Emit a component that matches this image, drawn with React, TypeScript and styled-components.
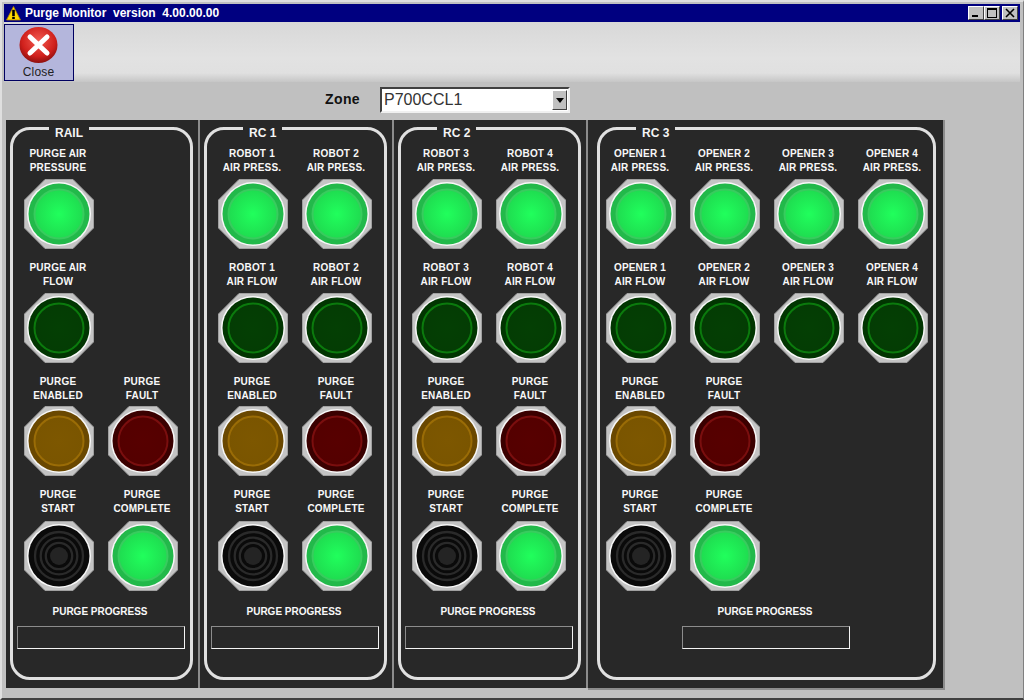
import React from "react";
import styled, { createGlobalStyle } from "styled-components";

const Global = createGlobalStyle`
  html, body { margin: 0; padding: 0; background: #c0c0c0; }
  * { box-sizing: border-box; }
  body { font-family: "Liberation Sans", Arial, sans-serif; }
`;

const Win = styled.div`
  width: 1024px;
  height: 700px;
  overflow: hidden;
  background: #c0c0c0;
  border-top: 2px solid #dfdfdf;
  border-left: 2px solid #dfdfdf;
  border-right: 1px solid #808080;
  border-bottom: 2px solid #404040;
  padding: 2px 3px 0 2px;
  display: flex;
  flex-direction: column;
`;
const TitleBar = styled.div`
  height: 18px;
  flex: none;
  background: #000080;
  display: flex;
  align-items: center;
  padding: 0 2px 0 2px;
  color: #fff;
`;
const TitleText = styled.span`
  font: bold 12px/18px "Liberation Sans", Arial, sans-serif;
  white-space: pre;
  margin-left: 4px;
`;
const WinBtns = styled.div`
  margin-left: auto;
  display: flex;
`;
const WinBtn = styled.div<{ $gap?: number }>`
  width: 16px;
  height: 14px;
  margin-left: ${(p) => p.$gap ?? 0}px;
  background: #c0c0c0;
  border: 1px solid;
  border-color: #fff #404040 #404040 #fff;
  display: flex;
  align-items: center;
  justify-content: center;
`;
const Toolbar = styled.div`
  height: 60px;
  flex: none;
  padding-top: 2px;
  background: linear-gradient(to bottom, #d8d8d8 0%, #e2e2e2 60%, #e0e0e0 85%, #c6c6c6 100%);
`;
const CloseBtn = styled.div`
  width: 70px;
  height: 57px;
  background: #b4b6dc;
  border: 1px solid #000060;
  display: flex;
  flex-direction: column;
  align-items: center;
  padding-top: 2px;
`;
const CloseLabel = styled.span`
  margin-top: 2px;
  margin-left: -1px;
  font: 12px/14px "Liberation Sans", Arial, sans-serif;
  color: #222;
  letter-spacing: 0.2px;
`;
const ZoneRow = styled.div`
  height: 38px;
  flex: none;
  display: flex;
  align-items: flex-start;
  padding: 5px 0 0 321px;
`;
const ZoneLabel = styled.span`
  font: bold 14px/24px "Liberation Sans", Arial, sans-serif;
  color: #111;
  width: 55px;
  letter-spacing: 0.4px;
`;
const Select = styled.div`
  width: 190px;
  height: 26px;
  background: #fff;
  border: 2px solid;
  border-color: #404040 #f0f0f0 #f0f0f0 #404040;
  display: flex;
  align-items: center;
  padding-left: 2px;
  font: 16px/22px "Liberation Sans", Arial, sans-serif;
  color: #333;
`;
const Arrow = styled.div`
  margin-left: auto;
  margin-right: 1px;
  width: 15px;
  height: 20px;
  background: #c0c0c0;
  border: 1px solid;
  border-color: #fff #404040 #404040 #fff;
  display: flex;
  align-items: center;
  justify-content: center;
`;
const Panels = styled.div`
  display: flex;
  margin-left: 2px;
`;
const Panel = styled.div<{ $w: number }>`
  width: ${(p) => p.$w}px;
  height: 568px;
  background: #282828;
  padding: 7px 0 8px 0;
  margin-right: 2px;
  box-shadow: 2px 0 0 #8c8c8c;
`;
const LastPanel = styled(Panel)`
  box-shadow: 2px 0 0 #8c8c8c, 0 2px 0 #8c8c8c, 2px 2px 0 #8c8c8c;
`;
const Frame = styled.div<{ $w: number; $left: number }>`
  position: relative;
  width: ${(p) => p.$w}px;
  height: 553px;
  margin-left: ${(p) => p.$left}px;
  border: 3px solid #e0e0e0;
  border-radius: 20px;
  padding-top: 16px;
`;
const Legend = styled.span<{ $left: number }>`
  position: absolute;
  top: -5px;
  left: ${(p) => p.$left}px;
  padding: 0 6px;
  background: #282828;
  color: #f4f4f4;
  font: bold 12px/16px "Liberation Sans", Arial, sans-serif;
  white-space: nowrap;
`;
const Row = styled.div<{ $top: number; $inset: number }>`
  display: flex;
  margin-top: ${(p) => p.$top}px;
  margin-left: ${(p) => p.$inset}px;
`;
const Cell = styled.div<{ $gap: number }>`
  width: 84px;
  flex: none;
  display: flex;
  flex-direction: column;
  align-items: center;
  gap: ${(p) => p.$gap}px;
`;
const Label = styled.div`
  width: 84px;
  height: 28px;
  padding: 1px 2px 0 0;
  text-align: center;
  color: #f8f8f8;
  font: bold 10px/14px "Liberation Sans", Arial, sans-serif;
  letter-spacing: 0.2px;
  white-space: pre-line;
`;
const ProgressLabel = styled.div`
  margin-top: 14px;
  height: 14px;
  padding-right: 3px;
  text-align: center;
  color: #f8f8f8;
  font: bold 10px/14px "Liberation Sans", Arial, sans-serif;
`;
const Bar = styled.div<{ $shift: number }>`
  width: 168px;
  height: 23px;
  margin-top: 7px;
  margin-left: ${(p) => p.$shift}px;
  border: 1px solid;
  border-color: #8c8c8c #f4f4f4 #f4f4f4 #8c8c8c;
`;

type Kind = "on" | "off" | "amber" | "red" | "black";
const LAMP: Record<string, { edge: string; c0: string; c1: string; ring: string }> = {
  on: { edge: "#22b94a", c0: "#20ff5c", c1: "#1fdc50", ring: "#38cc5e" },
  off: { edge: "#013501", c0: "#043f04", c1: "#043c04", ring: "#0b7a0d" },
  amber: { edge: "#6a4800", c0: "#7d5700", c1: "#7a5500", ring: "#9a6c06" },
  red: { edge: "#3a0000", c0: "#570000", c1: "#540000", ring: "#7a0e0e" },
};

const Octagon = () => (
  <>
    <polygon
      points="21,0.5 49,0.5 69.5,21 69.5,49 49,69.5 21,69.5 0.5,49 0.5,21"
      fill="#c4c4c4"
      stroke="#a0a0a0"
      strokeWidth="1"
    />
    <circle cx="35" cy="35" r="32" fill="#f8f8f8" />
  </>
);

const Lamp = ({ kind }: { kind: Kind }) => {
  const id = React.useId();
  if (kind === "black") {
    return (
      <svg width="70" height="70" viewBox="0 0 70 70">
        <Octagon />
        <circle cx="35" cy="35" r="30.5" fill="#0a0a0a" />
        {[24, 18.3, 13.2].map((r) => (
          <circle key={r} cx="35" cy="35" r={r} fill="none" stroke="#2a2a2a" strokeWidth="2.3" />
        ))}
        <circle cx="35" cy="35" r="9" fill="#242424" />
      </svg>
    );
  }
  const c = LAMP[kind];
  return (
    <svg width="70" height="70" viewBox="0 0 70 70">
      <defs>
        <radialGradient id={id}>
          <stop offset="0%" stopColor={c.c0} />
          <stop offset="100%" stopColor={c.c1} />
        </radialGradient>
      </defs>
      <Octagon />
      <circle cx="35" cy="35" r="30.5" fill={c.edge} />
      <circle cx="35" cy="35" r="24.5" fill={`url(#${id})`} stroke={c.ring} strokeWidth="2" />
    </svg>
  );
};

const Warning = () => (
  <svg width="15" height="15" viewBox="0 0 15 15">
    <polygon points="7.5,0.5 14.5,14 0.5,14" fill="#ffd800" stroke="#b08400" strokeWidth="0.8" />
    <rect x="6.2" y="3.8" width="2.6" height="6.2" fill="#000" />
    <rect x="6.2" y="10.8" width="2.6" height="2.2" fill="#000" />
  </svg>
);

const CloseIcon = () => (
  <svg width="40" height="36" viewBox="0 0 40 36">
    <defs>
      <radialGradient id="closeRed" cx="50%" cy="38%" r="62%">
        <stop offset="0%" stopColor="#f25a50" />
        <stop offset="70%" stopColor="#d0201c" />
        <stop offset="100%" stopColor="#8e1010" />
      </radialGradient>
    </defs>
    <ellipse cx="19.5" cy="18" rx="19" ry="18" fill="url(#closeRed)" />
    <path d="M11 10 L28 26 M28 10 L11 26" stroke="#fff" strokeWidth="5" strokeLinecap="round" />
  </svg>
);

type L = { t: string; k: Kind } | null;
const common = (): L[][] => [
  [{ t: "PURGE\nENABLED", k: "amber" }, { t: "PURGE\nFAULT", k: "red" }],
  [{ t: "PURGE\nSTART", k: "black" }, { t: "PURGE\nCOMPLETE", k: "on" }],
];
const robots = (a: number, b: number): L[][] => [
  [{ t: `ROBOT ${a}\nAIR PRESS.`, k: "on" }, { t: `ROBOT ${b}\nAIR PRESS.`, k: "on" }],
  [{ t: `ROBOT ${a}\nAIR FLOW`, k: "off" }, { t: `ROBOT ${b}\nAIR FLOW`, k: "off" }],
  ...common(),
];
const openers: L[][] = [
  [1, 2, 3, 4].map((n) => ({ t: `OPENER ${n}\nAIR PRESS.`, k: "on" as Kind })),
  [1, 2, 3, 4].map((n) => ({ t: `OPENER ${n}\nAIR FLOW`, k: "off" as Kind })),
  ...common(),
];
const rail: L[][] = [
  [{ t: "PURGE AIR\nPRESSURE", k: "on" }, null],
  [{ t: "PURGE AIR\nFLOW", k: "off" }, null],
  ...common(),
];

const ROW = [
  { top: 0, gap: 5 },
  { top: 11, gap: 5 },
  { top: 11, gap: 4 },
  { top: 11, gap: 6 },
];

const Body = ({ title, rows, inset, fw, fl, bar }: { title: string; rows: L[][]; inset: number; fw: number; fl: number; bar: number }) => (
  <Frame $w={fw} $left={fl}>
    <Legend $left={36}>{title}</Legend>
    {rows.map((r, i) => (
      <Row key={i} $top={ROW[i].top} $inset={inset}>
        {r.map((c, j) =>
          c ? (
            <Cell key={j} $gap={ROW[i].gap}>
              <Label>{c.t}</Label>
              <Lamp kind={c.k} />
            </Cell>
          ) : (
            <Cell key={j} $gap={0} />
          )
        )}
      </Row>
    ))}
    <ProgressLabel>PURGE PROGRESS</ProgressLabel>
    <Bar $shift={bar} />
  </Frame>
);

export default function App() {
  return (
    <Win>
      <Global />
      <TitleBar>
        <Warning />
        <TitleText>{"Purge Monitor  version  4.00.00.00"}</TitleText>
        <WinBtns>
          <WinBtn>
            <svg width="10" height="10" viewBox="0 0 10 10"><rect x="1" y="7" width="6" height="2" fill="#000" /></svg>
          </WinBtn>
          <WinBtn>
            <svg width="10" height="10" viewBox="0 0 10 10"><rect x="0.5" y="0.5" width="9" height="9" fill="none" stroke="#000" /><rect x="0" y="0" width="10" height="2" fill="#000" /></svg>
          </WinBtn>
          <WinBtn $gap={2}>
            <svg width="10" height="10" viewBox="0 0 10 10"><path d="M1 1 L9 9 M9 1 L1 9" stroke="#000" strokeWidth="1.6" /></svg>
          </WinBtn>
        </WinBtns>
      </TitleBar>
      <Toolbar>
        <CloseBtn>
          <CloseIcon />
          <CloseLabel>Close</CloseLabel>
        </CloseBtn>
      </Toolbar>
      <ZoneRow>
        <ZoneLabel>Zone</ZoneLabel>
        <Select>
          P700CCL1
          <Arrow>
            <svg width="8" height="5" viewBox="0 0 8 5"><polygon points="0,0 8,0 4,5" fill="#000" /></svg>
          </Arrow>
        </Select>
      </ZoneRow>
      <Panels>
        <Panel $w={192}><Body title="RAIL" rows={rail} inset={4} fw={183} fl={4} bar={4} /></Panel>
        <Panel $w={192}><Body title="RC 1" rows={robots(1, 2)} inset={4} fw={183} fl={4} bar={4} /></Panel>
        <Panel $w={192}><Body title="RC 2" rows={robots(3, 4)} inset={4} fw={183} fl={4} bar={4} /></Panel>
        <LastPanel $w={355}><Body title="RC 3" rows={openers} inset={-1} fw={339} fl={9} bar={82} /></LastPanel>
      </Panels>
    </Win>
  );
}
